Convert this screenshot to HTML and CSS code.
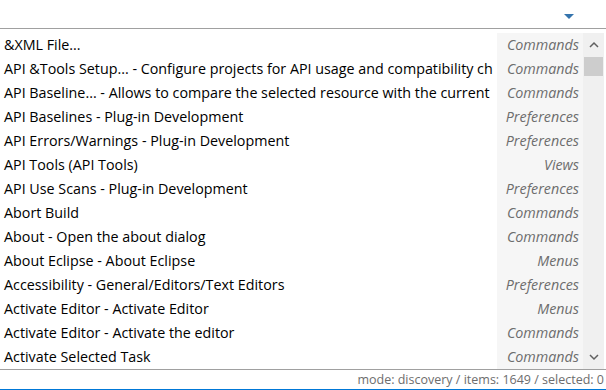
FILE: index.html
```html
<!DOCTYPE html>
<html lang="en">
<head>
    <meta charset="UTF-8">
    <title>Quick Access</title>
    <link rel="stylesheet" href="styles.css">
</head>
<body>
    <div class="popup">
        <div class="filter">
            <input type="text" class="filter-input">
            <svg class="menu-arrow" width="10" height="6" viewBox="0 0 10 6"><path d="M0 0H10L5 5Z" fill="#3474ad"/></svg>
        </div>
        <div class="list-area">
            <ul class="list">
                <li><span class="label">&amp;XML File...</span><span class="cat">Commands</span></li>
                <li><span class="label">API &amp;Tools Setup... - Configure projects for API usage and compatibility checks</span><span class="cat">Commands</span></li>
                <li><span class="label">API Baseline... - Allows to compare the selected resource with the current baseline</span><span class="cat">Commands</span></li>
                <li><span class="label">API Baselines - Plug-in Development</span><span class="cat">Preferences</span></li>
                <li><span class="label">API Errors/Warnings - Plug-in Development</span><span class="cat">Preferences</span></li>
                <li><span class="label">API Tools (API Tools)</span><span class="cat">Views</span></li>
                <li><span class="label">API Use Scans - Plug-in Development</span><span class="cat">Preferences</span></li>
                <li><span class="label">Abort Build</span><span class="cat">Commands</span></li>
                <li><span class="label">About - Open the about dialog</span><span class="cat">Commands</span></li>
                <li><span class="label">About Eclipse - About Eclipse</span><span class="cat">Menus</span></li>
                <li><span class="label">Accessibility - General/Editors/Text Editors</span><span class="cat">Preferences</span></li>
                <li><span class="label">Activate Editor - Activate Editor</span><span class="cat">Menus</span></li>
                <li><span class="label">Activate Editor - Activate the editor</span><span class="cat">Commands</span></li>
                <li><span class="label">Activate Selected Task</span><span class="cat">Commands</span></li>
            </ul>
            <div class="scrollbar">
                <svg class="sb-arrow" width="10" height="6" viewBox="0 0 10 6"><path d="M1 5L5 1L9 5" fill="none" stroke="#606060" stroke-width="1.5"/></svg>
                <div class="sb-track"><div class="sb-thumb"></div></div>
                <svg class="sb-arrow" width="10" height="6" viewBox="0 0 10 6"><path d="M1 1L5 5L9 1" fill="none" stroke="#606060" stroke-width="1.5"/></svg>
            </div>
        </div>
        <div class="status">mode: discovery / items: 1649 / selected: 0</div>
    </div>
</body>
</html>
```

FILE: styles.css
```css
body {
    margin: 0;
    background: #ffffff;
    font-family: "Open Sans", "Noto Sans", sans-serif;
}
.popup {
    width: 606px;
    height: 390px;
    display: flex;
    flex-direction: column;
    border-bottom: 1px solid #0078d7;
    box-sizing: border-box;
}
.filter {
    height: 28px;
    display: flex;
    align-items: center;
    border-bottom: 1px solid #a0a0a0;
    padding-right: 32px;
}
.filter-input {
    flex: 1;
    border: none;
    outline: none;
    height: 20px;
    background: transparent;
}
.menu-arrow {
    margin-top: 5px;
}
.list-area {
    display: flex;
    padding-top: 4px;
    border-bottom: 1px solid #a0a0a0;
}
.list {
    list-style: none;
    margin: 0;
    padding: 0;
    width: 583px;
}
.list li {
    display: flex;
    height: 24px;
    line-height: 24px;
}
.label {
    flex: 1;
    min-width: 0;
    overflow: hidden;
    white-space: nowrap;
    padding-left: 4px;
    margin-right: 4px;
    font-size: 14.3px;
    color: #000000;
}
.cat {
    width: 82px;
    flex: none;
    padding-right: 4px;
    text-align: right;
    font-size: 14.3px;
    font-style: italic;
    color: #6d6d6d;
    background: #f6f6f6;
}
.scrollbar {
    width: 21px;
    background: #f0f0f0;
    display: flex;
    flex-direction: column;
    align-items: center;
}
.sb-arrow {
    height: 24px;
    flex: none;
}
.sb-track {
    flex: 1;
    width: 100%;
}
.sb-thumb {
    height: 19px;
    background: #cdcdcd;
    margin: 0 1px;
}
.status {
    flex: 1;
    text-align: right;
    font-size: 12.5px;
    color: #6d6d6d;
    padding-right: 2px;
    line-height: 19px;
}
```
